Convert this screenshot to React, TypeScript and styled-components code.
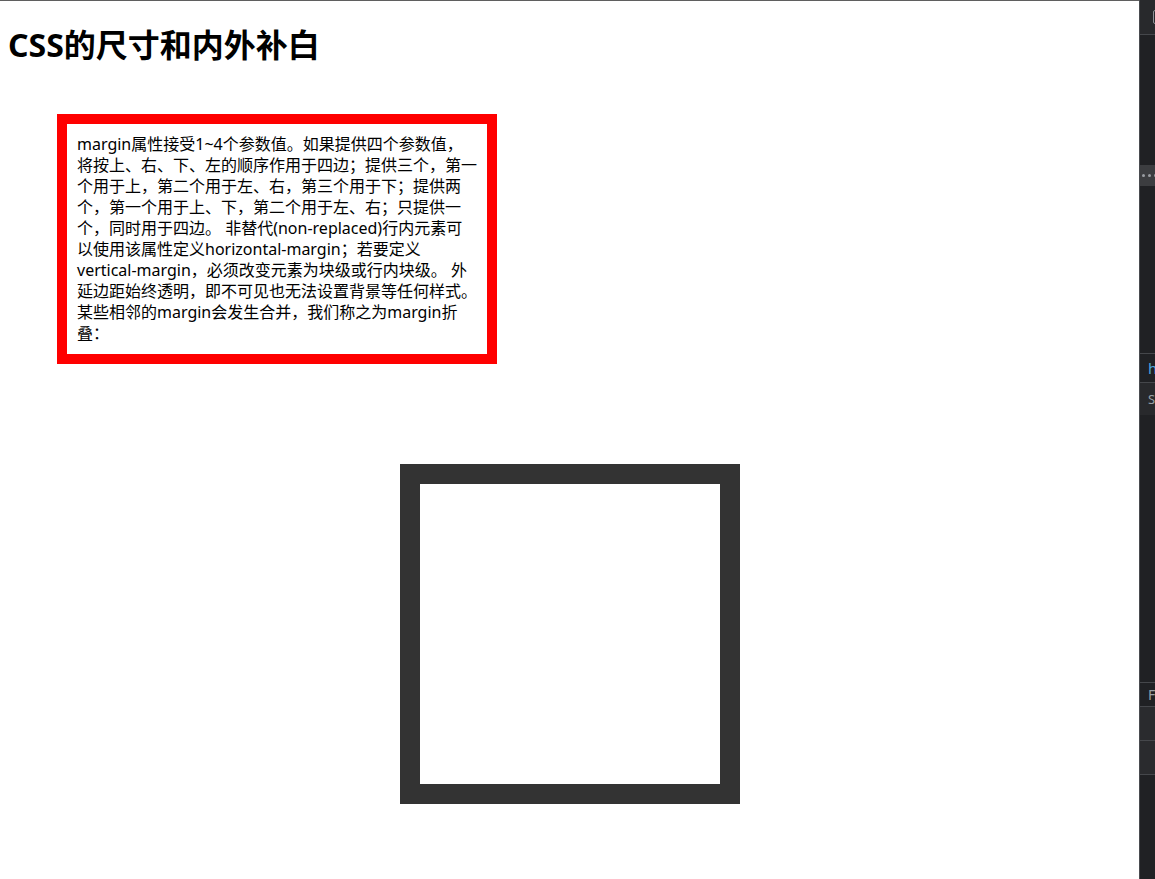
import React from "react";
import styled, { createGlobalStyle } from "styled-components";

const GlobalStyle = createGlobalStyle`
  html, body {
    margin: 0;
    padding: 0;
    background: #ffffff;
    overflow: hidden;
  }
`;

const Shell = styled.div`
  display: flex;
  width: 1155px;
  height: 879px;
`;

const Viewport = styled.main`
  flex: 1;
  min-width: 0;
  border-top: 1px solid #5f5f5f;
  padding: 0 8px;
  background: #ffffff;
  color: #000000;
  font-family: "Noto Sans", "Noto Sans CJK SC", sans-serif;
`;

const Title = styled.h1`
  margin: 22px 0 0;
  font-size: 32px;
  line-height: 44px;
  font-weight: 700;
`;

const MarginBox = styled.div`
  width: 400px;
  margin: 47px 0 0 49px;
  padding: 10px;
  border: 10px solid #ff0000;
  font-size: 16px;
  line-height: 21px;
`;

const Square = styled.div`
  width: 300px;
  height: 300px;
  margin: 100px auto 0;
  border: 20px solid #333333;
`;

const DevTools = styled.aside`
  width: 15px;
  border-left: 1px solid #4a4c50;
  background: #202124;
  display: flex;
  flex-direction: column;
  overflow: hidden;
  font-family: "Noto Sans", "DejaVu Sans", sans-serif;
`;

const DevToolbar = styled.div`
  height: 34px;
  flex: none;
  display: flex;
  align-items: center;
  padding-left: 13px;
  background: #28292c;
  border-bottom: 1px solid #45474b;
`;

const ToolIcon = styled.span`
  flex: none;
  width: 14px;
  height: 14px;
  box-sizing: border-box;
  border: 1.5px solid #8d9096;
  border-radius: 2px;
`;

const DevPane = styled.div<{ $h?: number }>`
  flex: ${(p) => (p.$h ? "none" : "1")};
  height: ${(p) => (p.$h ? `${p.$h}px` : "auto")};
  background: #202124;
`;

const Splitter = styled.div`
  height: 21px;
  flex: none;
  display: flex;
  align-items: center;
  gap: 3px;
  padding-left: 2px;
  background: #3c3d40;
`;

const Dot = styled.span`
  flex: none;
  width: 3px;
  height: 3px;
  border-radius: 50%;
  background: #9a9da2;
`;

const PanelRow = styled.div<{ $h: number; $bg?: string; $color?: string; $size?: number }>`
  height: ${(p) => p.$h}px;
  flex: none;
  display: flex;
  align-items: center;
  padding-left: 8px;
  border-top: 1px solid #45474b;
  background: ${(p) => p.$bg ?? "#202124"};
  color: ${(p) => p.$color ?? "#9aa0a6"};
  font-size: ${(p) => p.$size ?? 13}px;
  white-space: nowrap;
`;

const Closer = styled.div`
  height: 0;
  flex: none;
  border-top: 1px solid #45474b;
`;

const text =
  "margin属性接受1~4个参数值。如果提供四个参数值，将按上、右、下、左的顺序作用于四边；提供三个，第一个用于上，第二个用于左、右，第三个用于下；提供两个，第一个用于上、下，第二个用于左、右；只提供一个，同时用于四边。 非替代(non-replaced)行内元素可以使用该属性定义horizontal-margin；若要定义vertical-margin，必须改变元素为块级或行内块级。 外延边距始终透明，即不可见也无法设置背景等任何样式。某些相邻的margin会发生合并，我们称之为margin折叠：";

export default function App() {
  return (
    <>
      <GlobalStyle />
      <Shell>
        <Viewport>
          <Title>CSS的尺寸和内外补白</Title>
          <MarginBox>{text}</MarginBox>
          <Square />
        </Viewport>
        <DevTools>
          <DevToolbar>
            <ToolIcon />
          </DevToolbar>
          <DevPane $h={130} />
          <Splitter>
            <Dot />
            <Dot />
            <Dot />
          </Splitter>
          <DevPane $h={167} />
          <PanelRow $h={28} $color="#4ea3dc" $size={15}>
            html
          </PanelRow>
          <PanelRow $h={32} $bg="#28292c">
            Styles
          </PanelRow>
          <DevPane $h={267} />
          <PanelRow $h={23} $size={14}>
            Filter
          </PanelRow>
          <PanelRow $h={33} $bg="#2a2b2e" />
          <PanelRow $h={33} $bg="#2a2b2e" />
          <Closer />
          <DevPane />
        </DevTools>
      </Shell>
    </>
  );
}
